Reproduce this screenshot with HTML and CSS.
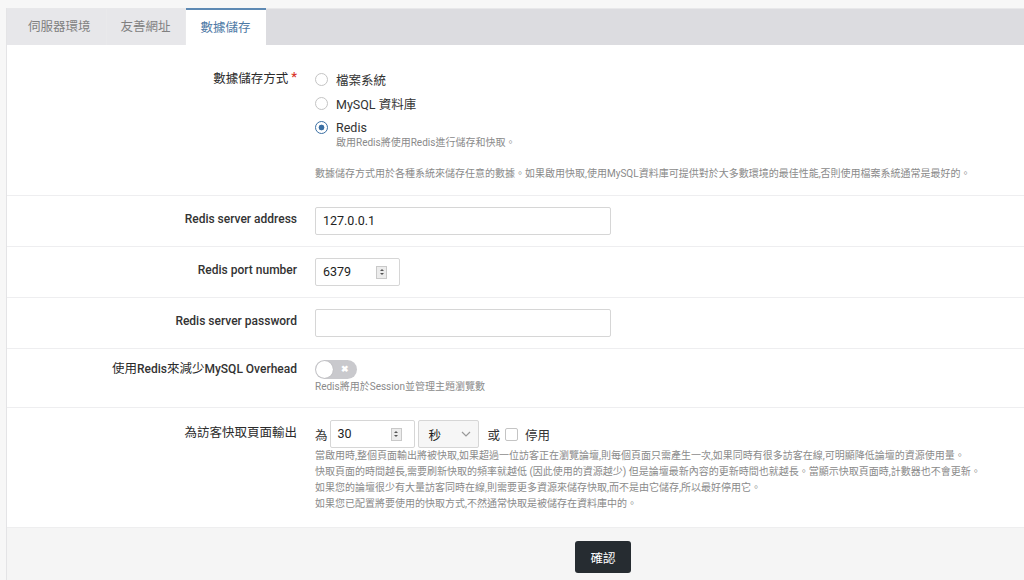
FILE: index.html
```html
<!DOCTYPE html>
<html lang="zh-Hant">
<head>
<meta charset="utf-8">
<title>數據儲存</title>
<link rel="stylesheet" href="styles.css">
</head>
<body>
<div class="panel">
  <div class="tabs">
    <div class="tab tab-first">伺服器環境</div>
    <div class="tab tab-second">友善網址</div>
    <div class="tab active">數據儲存</div>
  </div>
  <form class="form">
    <div class="row row-storage">
      <label class="label"><span class="zh">數據儲存方式</span><span class="req">*</span></label>
      <div class="control">
        <div class="radio"><span class="radio-box"></span><span>檔案系統</span></div>
        <div class="radio"><span class="radio-box"></span><span>MySQL 資料庫</span></div>
        <div class="radio radio-last"><span class="radio-box checked"></span><span>Redis</span></div>
        <div class="radio-help">啟用Redis將使用Redis進行儲存和快取。</div>
        <div class="help desc">數據儲存方式用於各種系統來儲存任意的數據。如果啟用快取,使用MySQL資料庫可提供對於大多數環境的最佳性能,否則使用檔案系統通常是最好的。</div>
      </div>
    </div>
    <div class="row">
      <label class="label">Redis server address</label>
      <div class="control"><div class="input wide">127.0.0.1</div></div>
    </div>
    <div class="row">
      <label class="label">Redis port number</label>
      <div class="control"><div class="input num port"><span>6379</span><span class="spin"><i class="up"></i><i class="down"></i></span></div></div>
    </div>
    <div class="row">
      <label class="label">Redis server password</label>
      <div class="control"><div class="input wide"></div></div>
    </div>
    <div class="row row-toggle">
      <label class="label"><span class="zh">使用</span>Redis<span class="zh">來減少</span>MySQL Overhead</label>
      <div class="control">
        <div class="toggle"><span class="knob"></span><span class="x">&#x2716;</span></div>
        <div class="help">Redis將用於Session並管理主題瀏覽數</div>
      </div>
    </div>
    <div class="row row-cache">
      <label class="label"><span class="zh">為訪客快取頁面輸出</span></label>
      <div class="control">
        <div class="inline">
          <span class="word">為</span>
          <div class="input num cache"><span>30</span><span class="spin"><i class="up"></i><i class="down"></i></span></div>
          <div class="select"><span>秒</span><svg class="chev" width="10" height="6" viewBox="0 0 10 6"><path d="M1 1 L5 5 L9 1" fill="none" stroke="#999" stroke-width="1.2"/></svg></div>
          <span class="word or">或</span>
          <span class="checkbox"></span>
          <span class="word">停用</span>
        </div>
        <div class="help lines">當啟用時,整個頁面輸出將被快取,如果超過一位訪客正在瀏覽論壇,則每個頁面只需產生一次,如果同時有很多訪客在線,可明顯降低論壇的資源使用量。<br>快取頁面的時間越長,需要刷新快取的頻率就越低 (因此使用的資源越少) 但是論壇最新內容的更新時間也就越長。當顯示快取頁面時,計數器也不會更新。<br>如果您的論壇很少有大量訪客同時在線,則需要更多資源來儲存快取,而不是由它儲存,所以最好停用它。<br>如果您已配置將要使用的快取方式,不然通常快取是被儲存在資料庫中的。</div>
      </div>
    </div>
    <div class="footer">
      <button type="button" class="btn">確認</button>
    </div>
  </form>
</div>
</body>
</html>
```
FILE: styles.css
```css
* { box-sizing: border-box; }
html, body { margin: 0; padding: 0; }
body {
  background: #f7f7f7;
  font-family: Roboto, "Noto Sans CJK TC", sans-serif;
  color: #333;
  height: 580px;
  overflow: hidden;
}
.panel {
  margin: 8px 0 0 6px;
  background: #fff;
  border-left: 1px solid #e4e4e6;
}
.tabs {
  display: flex;
  height: 37px;
  background: #dcdce0;
  border-top: 1px solid #e8e8ea;
}
.tab {
  padding: 0 15px;
  line-height: 35px;
  font-size: 12.5px;
  color: #808080;
  border-right: 1px solid #e9e9eb;
  background: #e7e7ea;
}
.tab-first { padding: 0 15px 0 21px; }
.tab-second { padding: 0 14px 0 14px; }
.tab.active {
  background: #fff;
  color: #4d79a5;
  border-top: 2px solid #5d89b3;
  margin-top: -1px;
  line-height: 35px;
  padding: 0 15px;
  border-right: none;
}
.form { display: block; }
.row {
  display: grid;
  grid-template-columns: 290px 1fr;
  column-gap: 18px;
  border-bottom: 1px solid #eeeef0;
  padding: 11px 0 11px;
}
.label {
  text-align: right;
  font-size: 12px;
  font-weight: 500;
  color: #333;
  line-height: 20px;
  padding-top: 2px;
}
.zh { font-weight: 400; font-size: 12.5px; color: #2a2a2a; }
.req { color: #d9362b; margin-left: 3px; font-size: 13px; position: relative; top: -2px; }
.row-storage { padding: 22px 0 13px; }
.row-storage .label { padding-top: 2px; }
.radio {
  display: flex;
  align-items: center;
  height: 24px;
  font-size: 12.5px;
  color: #333;
}
.radio-box {
  width: 13px; height: 13px;
  border: 1px solid #c4c4c4;
  border-radius: 50%;
  margin-right: 8px;
  background: #fff;
  flex: none;
}
.radio-box.checked {
  border-color: #3b6fa3;
  background: radial-gradient(circle, #3b6fa3 0 2.6px, #fff 3.2px);
}
.radio-last { height: 20px; margin-top: 2px; }
.radio-help {
  padding-left: 21px;
  font-size: 10px;
  color: #8a8a8a;
  line-height: 12px;
}
.help {
  font-size: 10px;
  color: #8a8a8a;
  line-height: 16px;
}
.desc { margin-top: 17px; }
.input {
  height: 28px;
  border: 1px solid #d6d6d6;
  border-radius: 2px;
  padding: 0 7px;
  font-size: 12.5px;
  line-height: 26px;
  color: #222;
  background: #fff;
}
.wide { width: 296px; }
.num { display: flex; align-items: center; justify-content: space-between; }
.port { width: 85px; }
.cache { width: 85px; }
.spin {
  width: 11px; height: 13px;
  border: 1px solid #c9c9c9;
  background: #ececec;
  display: flex; flex-direction: column; align-items: center; justify-content: center;
  gap: 2px;
  margin-right: 5px;
}
.spin i { display: block; width: 0; height: 0; border-left: 2px solid transparent; border-right: 2px solid transparent; }
.spin .up { border-bottom: 2px solid #555; }
.spin .down { border-top: 2px solid #555; }
.row-toggle { padding: 10px 0 12px; }
.row-toggle .label { padding-top: 0; }
.toggle {
  width: 42px; height: 19px;
  border-radius: 10px;
  background: #c9c9cd;
  position: relative;
  display: flex; align-items: center;
  margin-top: 1px;
}
.knob {
  width: 17px; height: 17px; border-radius: 50%;
  background: #fff;
  margin-left: 1px;
  box-shadow: 0 0 1px rgba(0,0,0,.25);
}
.x { color: #fff; font-size: 9px; font-weight: 700; margin-left: 8px; line-height: 1; }
.row-toggle .help { margin-top: 0; }
.row-cache { padding: 12px 0 15px; border-bottom: none; }
.row-cache .label { padding-top: 3px; }
.inline { display: flex; align-items: center; height: 28px; font-size: 12.5px; }
.word { color: #333; }
.inline .cache { margin-left: 2px; }
.select {
  width: 61px; height: 28px;
  margin-left: 3px;
  border: 1px solid #d6d6d6;
  border-radius: 2px;
  background: #f6f6f6;
  display: flex; align-items: center; justify-content: space-between;
  padding: 0 7px 0 10px;
  color: #222;
}
.or { margin-left: 9px; }
.checkbox {
  width: 13px; height: 13px;
  border: 1px solid #c4c4c4;
  border-radius: 2px;
  margin: 0 7px 0 5px;
  background: #fff;
}
.footer {
  background: #f5f5f5;
  border-top: 1px solid #eeeeef;
  height: 60px;
  padding: 13px 0 0 568px;
}
.btn {
  width: 56px; height: 32px;
  background: #262c31;
  color: #fff;
  border: none;
  border-radius: 3px;
  font-family: Roboto, "Noto Sans CJK TC", sans-serif;
  font-size: 12.5px;
}
```
